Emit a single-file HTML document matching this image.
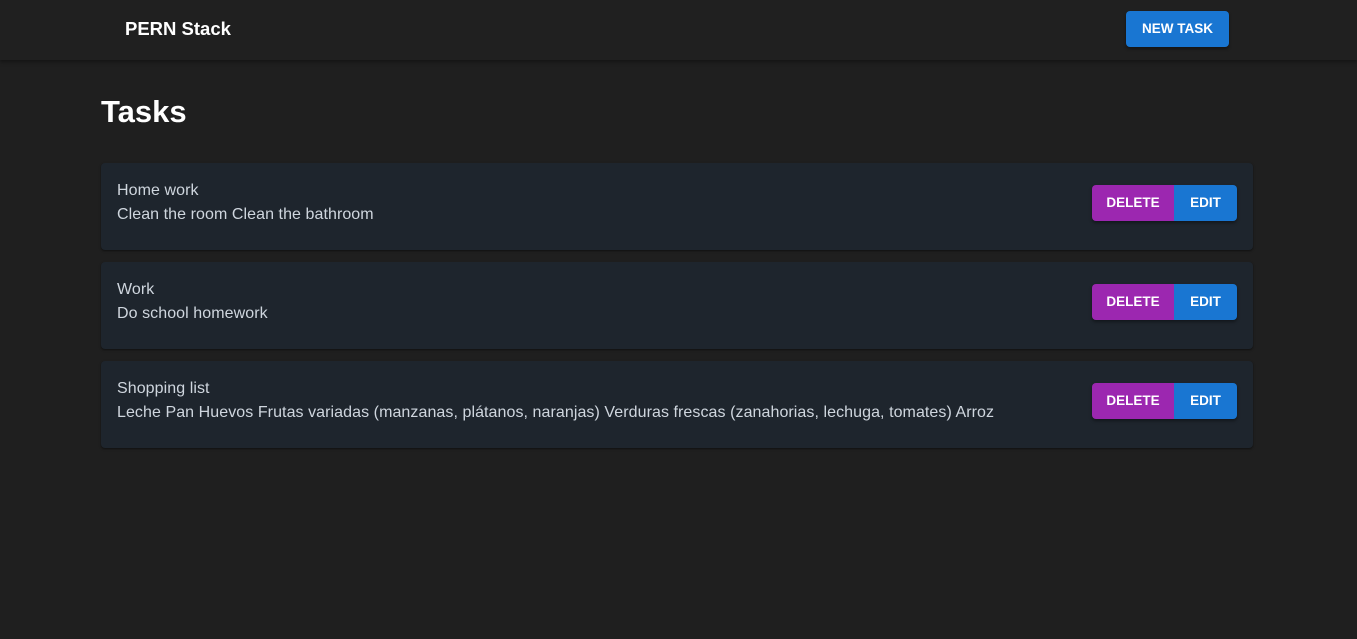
<!DOCTYPE html>
<html><head><style>
body{margin:0;background:#1f1f1f;font-family:"Liberation Sans",sans-serif;width:1357px;height:639px;overflow:hidden;position:relative}
.bar{position:absolute;left:0;top:0;width:1357px;height:60px;background:#202020;box-shadow:0 2px 4px rgba(0,0,0,.4)}
.brand{position:absolute;left:125px;top:18px;color:#fff;font-weight:bold;font-size:18.5px}
.nt{position:absolute;left:1126px;top:11px;width:103px;height:36px;background:#1976d2;color:#fff;font-weight:bold;font-size:13.5px;border-radius:4px;text-align:center;line-height:36px;box-shadow:0 2px 3px rgba(0,0,0,.4)}
h1{position:absolute;left:101px;top:94px;margin:0;color:#fff;font-size:31px;font-weight:bold}
.card{position:absolute;left:101px;width:1152px;height:87px;background:#1e252d;border-radius:4px;box-shadow:0 1px 2px rgba(0,0,0,.5)}
.t{position:absolute;left:16px;top:16px;color:#cfd6de;font-size:16px;line-height:24px;letter-spacing:0.07px}
.btns{position:absolute;left:991px;top:22px;height:36px;display:flex;border-radius:4px;overflow:hidden;box-shadow:0 2px 3px rgba(0,0,0,.4)}
.btns div{color:#fff;font-weight:bold;font-size:13.5px;line-height:36px;text-align:center}
.d{width:82px;background:#9c27b0}.e{width:63px;background:#1976d2}
</style></head><body>
<div class="bar"><div class="brand">PERN Stack</div><div class="nt">NEW TASK</div></div>
<h1>Tasks</h1>
<div class="card" style="top:163px"><div class="t">Home work<br>Clean the room Clean the bathroom</div><div class="btns"><div class="d">DELETE</div><div class="e">EDIT</div></div></div>
<div class="card" style="top:262px"><div class="t">Work<br>Do school homework</div><div class="btns"><div class="d">DELETE</div><div class="e">EDIT</div></div></div>
<div class="card" style="top:361px"><div class="t">Shopping list<br>Leche Pan Huevos Frutas variadas (manzanas, plátanos, naranjas) Verduras frescas (zanahorias, lechuga, tomates) Arroz</div><div class="btns"><div class="d">DELETE</div><div class="e">EDIT</div></div></div>
</body></html>
